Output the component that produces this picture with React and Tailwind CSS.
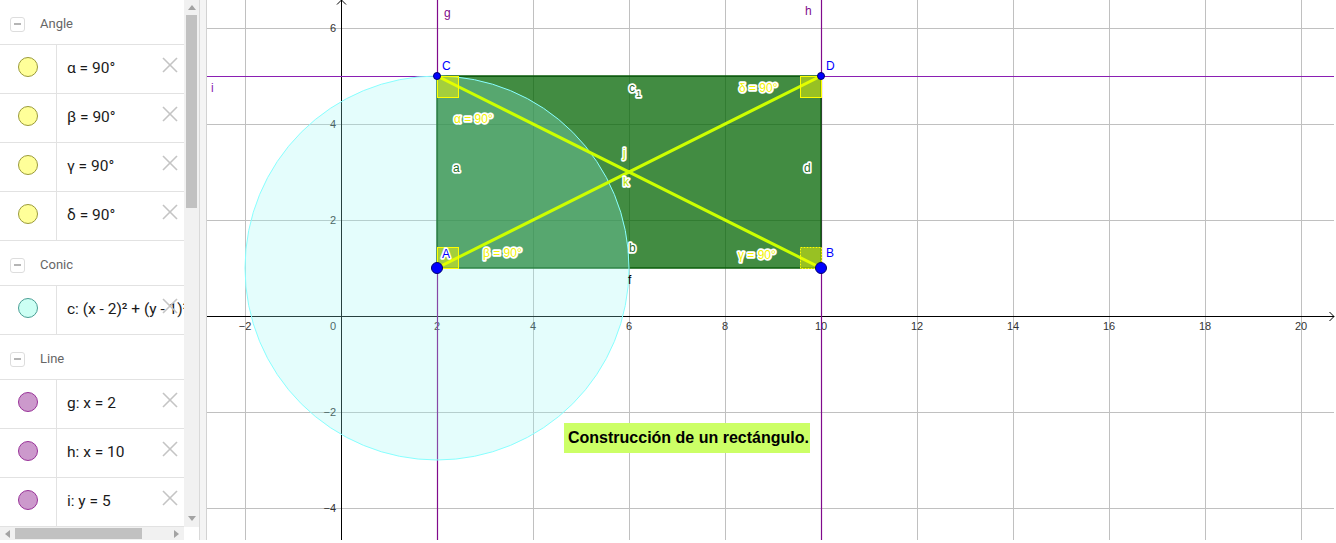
import React from "react";

const X = (v) => 341 + 48 * v;
const Y = (v) => 316 - 48 * v;

function Minus() {
  return (
    <div className="w-[15px] h-[15px] border border-[#dddddd] rounded-[3px] flex items-center justify-center">
      <div className="w-[7px] h-[1.5px] bg-[#b5b5b5]" />
    </div>
  );
}

function Header({ label }) {
  return (
    <div className="h-[45px] border-b border-[#e2e2e2] flex items-center pt-[4px] pl-[10px] box-border">
      <Minus />
      <span className="ml-[15px] text-[13px] text-[#666666] font-['Roboto',sans-serif]">{label}</span>
    </div>
  );
}

function XIcon() {
  return (
    <svg width="16" height="16" viewBox="0 0 16 16" className="block">
      <line x1="1" y1="1" x2="15" y2="15" stroke="#c4c4c4" strokeWidth="1.6" />
      <line x1="15" y1="1" x2="1" y2="15" stroke="#c4c4c4" strokeWidth="1.6" />
    </svg>
  );
}

const dotStyles = {
  angle: "bg-[#ffff99] border-[#9a9a3a]",
  conic: "bg-[#ccfff4] border-[#4a9e94]",
  line: "bg-[#cc99cc] border-[#993399]",
};

function Row({ kind, text }) {
  return (
    <div className="h-[49px] border-b border-[#e2e2e2] flex box-border">
      <div className="w-[57px] h-full border-r border-[#e2e2e2] box-border shrink-0">
        <div className={"ml-[18px] mt-[12px] w-[20px] h-[20px] rounded-full border " + dotStyles[kind]} />
      </div>
      <div className="relative flex-1 h-full overflow-hidden">
        <div className="pl-[10px] pt-[13px] h-[20px] leading-[20px] text-[15.5px] text-[#1a1a1a] whitespace-nowrap font-['Roboto',sans-serif]">
          {text}
        </div>
        <div className="absolute top-[12px] right-[6px]">
          <XIcon />
        </div>
      </div>
    </div>
  );
}

function Tri({ dir }) {
  const pts = {
    up: "0,5 4,0 8,5",
    down: "0,0 4,5 8,0",
    left: "5,0 0,4 5,8",
    right: "0,0 5,4 0,8",
  }[dir];
  const w = dir === "up" || dir === "down" ? 8 : 5;
  const h = dir === "up" || dir === "down" ? 5 : 8;
  return (
    <svg width={w} height={h} viewBox={`0 0 ${w} ${h}`} className="block">
      <polygon points={pts} fill="#a3a3a3" />
    </svg>
  );
}

function AlgebraPanel() {
  return (
    <div className="w-[200px] h-[540px] border-r border-[#d9d9d9] flex flex-col shrink-0 box-border">
      <div className="flex h-[527px]">
        <div className="w-[184px] h-full overflow-hidden">
          <Header label="Angle" />
          <Row kind="angle" text="α = 90°" />
          <Row kind="angle" text="β = 90°" />
          <Row kind="angle" text="γ = 90°" />
          <Row kind="angle" text="δ = 90°" />
          <Header label="Conic" />
          <Row kind="conic" text="c: (x - 2)² + (y - 1)² = 16" />
          <Header label="Line" />
          <Row kind="line" text="g: x = 2" />
          <Row kind="line" text="h: x = 10" />
          <Row kind="line" text="i: y = 5" />
        </div>
        <div className="w-[15px] h-full bg-[#f1f1f1] flex flex-col">
          <div className="h-[15px] flex items-start justify-center pt-[5px]">
            <Tri dir="up" />
          </div>
          <div className="ml-[2px] w-[11px] h-[193px] bg-[#c1c1c1]" />
          <div className="flex-1" />
          <div className="h-[12px] flex items-start justify-center pt-[1px]">
            <Tri dir="down" />
          </div>
        </div>
      </div>
      <div className="flex h-[13px]">
        <div className="w-[184px] h-full bg-[#f1f1f1] flex items-center">
          <div className="ml-[5px] w-[5px]">
            <Tri dir="left" />
          </div>
          <div className="ml-[5px] w-[127px] h-[11px] bg-[#c1c1c1]" />
          <div className="flex-1" />
          <div className="mr-[5px] w-[5px]">
            <Tri dir="right" />
          </div>
        </div>
        <div className="flex-1 bg-white" />
      </div>
    </div>
  );
}

const FONT = "Liberation Sans, Arial, sans-serif";

function OL({ x, y, fill, size = 12, sw = 3.4, children }) {
  return (
    <g fontFamily={FONT} fontSize={size}>
      <text x={x} y={y} fill="#ffffff" stroke="#ffffff" strokeWidth={sw} strokeLinejoin="round">
        {children}
      </text>
      <text x={x} y={y} fill={fill}>
        {children}
      </text>
    </g>
  );
}

function Graphics() {
  const vGrid = [];
  for (let k = -1; k <= 10; k++) if (k !== 0) vGrid.push(341 + 96 * k);
  const hGrid = [28, 124, 220, 412, 508];
  const xLabels = [-2, 2, 4, 6, 8, 10, 12, 14, 16, 18, 20];
  const yLabels = [6, 4, 2, -2, -4];
  const fmt = (n) => (n < 0 ? "−" + Math.abs(n) : String(n));
  const sq = 21;
  return (
    <div className="relative w-[1129px] h-[540px] shrink-0">
      <svg width="1129" height="540" viewBox="207 0 1129 540" className="block">
        <rect x="207" y="0" width="1127" height="540" fill="#ffffff" />
        {vGrid.map((x) => (
          <line key={"v" + x} x1={x + 0.5} y1="0" x2={x + 0.5} y2="540" stroke="#c0c0c0" strokeWidth="1" />
        ))}
        {hGrid.map((y) => (
          <line key={"h" + y} x1="207" y1={y + 0.5} x2="1334" y2={y + 0.5} stroke="#c0c0c0" strokeWidth="1" />
        ))}
        <line x1="207" y1="316.5" x2="1334" y2="316.5" stroke="#000000" strokeWidth="1" />
        <polyline points="1329.5,312 1334,316.5 1329.5,321" fill="none" stroke="#000" strokeWidth="1" />
        <line x1="341.5" y1="0" x2="341.5" y2="540" stroke="#000000" strokeWidth="1" />
        <polyline points="337,4.5 341.5,0 346,4.5" fill="none" stroke="#000" strokeWidth="1" />
        <g fontFamily={FONT} fontSize="11" fill="#333333">
          {xLabels.map((v) => (
            <text key={"xl" + v} x={X(v)} y="330" textAnchor="middle">
              {fmt(v)}
            </text>
          ))}
          <text x="336" y="330" textAnchor="end">0</text>
          {yLabels.map((v) => (
            <text key={"yl" + v} x="336" y={Y(v) + 4} textAnchor="end">
              {fmt(v)}
            </text>
          ))}
        </g>
        <line x1="437.5" y1="0" x2="437.5" y2="540" stroke="#800a8c" strokeWidth="1.2" />
        <line x1="821.5" y1="0" x2="821.5" y2="540" stroke="#800a8c" strokeWidth="1.2" />
        <line x1="207" y1="76.5" x2="1334" y2="76.5" stroke="#8a1fb3" strokeWidth="1.2" />
        <polygon
          points="437,76 821,76 821,268 437,268"
          fill="#006400"
          fillOpacity="0.74"
          stroke="#0b5e0b"
          strokeWidth="1.5"
        />
        <circle cx="437" cy="268" r="192" fill="#96f8f3" fillOpacity="0.26" stroke="#88ffff" strokeWidth="1" />
        <line x1="437" y1="76" x2="821" y2="268" stroke="#ccff00" strokeWidth="3" />
        <line x1="437" y1="268" x2="821" y2="76" stroke="#ccff00" strokeWidth="3" />
        <g fill="#ffff00" fillOpacity="0.46" stroke="#ffff00" strokeWidth="1">
          <rect x="437.5" y="76.5" width={sq} height={sq} />
          <rect x={821.5 - sq} y="76.5" width={sq} height={sq} />
          <rect x="437.5" y={268.5 - sq} width={sq} height={sq} />
          <rect x={821.5 - sq} y={268.5 - sq} width={sq} height={sq} strokeDasharray="2 1" />
        </g>
        <circle cx="437" cy="76" r="3.5" fill="#0000ff" stroke="#00006e" strokeWidth="1" />
        <circle cx="821" cy="76" r="3.5" fill="#0000ff" stroke="#00006e" strokeWidth="1" />
        <circle cx="437" cy="268" r="5.5" fill="#0000ff" stroke="#00006e" strokeWidth="1" />
        <circle cx="821" cy="268" r="5.5" fill="#0000ff" stroke="#00006e" strokeWidth="1" />
        <g fontFamily={FONT} fontSize="12">
          <text x="442" y="70" fill="#0000ff">C</text>
          <text x="826" y="70" fill="#0000ff">D</text>
          <text x="826" y="257" fill="#0000ff">B</text>
          <text x="444" y="17" fill="#800a8c">g</text>
          <text x="805" y="15" fill="#800a8c">h</text>
          <text x="211" y="92" fill="#8a1fb3">i</text>
          <text x="628" y="284" fill="#000000">f</text>
        </g>
        <OL x={442} y={258} fill="#0000ff">A</OL>
        <OL x={454} y={123} fill="#f2f200">α = 90°</OL>
        <OL x={739} y={92} fill="#f2f200">δ = 90°</OL>
        <OL x={483} y={257} fill="#f2f200">β = 90°</OL>
        <OL x={738} y={259} fill="#f2f200">γ = 90°</OL>
        <OL x={453} y={172} fill="#1f6b1f">a</OL>
        <OL x={629} y={252} fill="#1f6b1f">b</OL>
        <OL x={629} y={92} fill="#1f6b1f">c</OL>
        <OL x={636} y={97} size={9} fill="#1f6b1f">1</OL>
        <OL x={804} y={172} fill="#1f6b1f">d</OL>
        <OL x={623} y={157} fill="#b8e600">j</OL>
        <OL x={623} y={186} fill="#b8e600">k</OL>
      </svg>
      <div className="absolute left-[357px] top-[423px] w-[246px] h-[30px] bg-[#ccff66] flex items-center pl-[4px] whitespace-nowrap text-[16px] font-bold text-black font-['Liberation_Sans',Arial,sans-serif]">
        Construcción de un rectángulo.
      </div>
    </div>
  );
}

export default function App() {
  return (
    <div className="w-[1336px] h-[543px] bg-white flex overflow-hidden">
      <AlgebraPanel />
      <div className="w-[7px] h-[540px] bg-[#f4f4f4] border-r border-[#d2d2d2] box-border shrink-0" />
      <Graphics />
    </div>
  );
}
